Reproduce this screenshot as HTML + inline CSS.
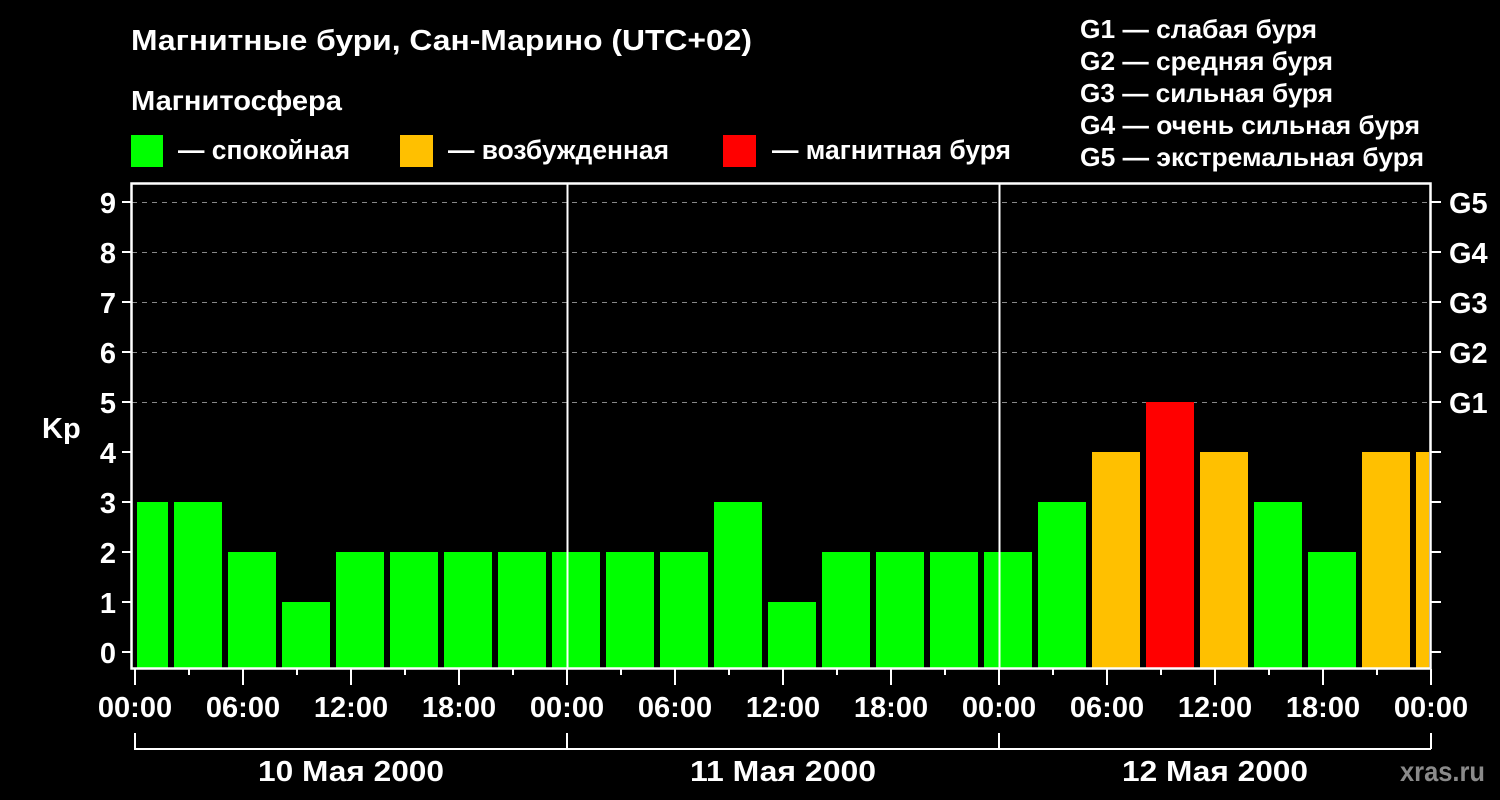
<!DOCTYPE html>
<html><head><meta charset="utf-8"><style>
html,body{margin:0;padding:0;background:#000;width:1500px;height:800px;overflow:hidden}
svg{display:block}
text{font-family:"Liberation Sans","DejaVu Sans",sans-serif;font-weight:bold;fill:#fff}
</style></head><body>
<svg width="1500" height="800" viewBox="0 0 1500 800" xmlns="http://www.w3.org/2000/svg">
<rect width="1500" height="800" fill="#000"/>
<text x="131" y="50" font-size="29" textLength="621" lengthAdjust="spacingAndGlyphs">Магнитные бури, Сан-Марино (UTC+02)</text>
<text x="131" y="110" font-size="28" textLength="211" lengthAdjust="spacingAndGlyphs">Магнитосфера</text>
<rect x="131" y="135" width="32" height="32" fill="#00ff00"/>
<text x="178" y="159" font-size="27" textLength="172" lengthAdjust="spacingAndGlyphs">— спокойная</text>
<rect x="400" y="135" width="33" height="32" fill="#ffc000"/>
<text x="448" y="159" font-size="27" textLength="221" lengthAdjust="spacingAndGlyphs">— возбужденная</text>
<rect x="723" y="135" width="33" height="32" fill="#ff0000"/>
<text x="772" y="159" font-size="27" textLength="239" lengthAdjust="spacingAndGlyphs">— магнитная буря</text>
<g font-size="26">
<text x="1080" y="38" textLength="237" lengthAdjust="spacingAndGlyphs">G1 — слабая буря</text>
<text x="1080" y="70" textLength="253" lengthAdjust="spacingAndGlyphs">G2 — средняя буря</text>
<text x="1080" y="102" textLength="253" lengthAdjust="spacingAndGlyphs">G3 — сильная буря</text>
<text x="1080" y="134" textLength="340" lengthAdjust="spacingAndGlyphs">G4 — очень сильная буря</text>
<text x="1080" y="166" textLength="344" lengthAdjust="spacingAndGlyphs">G5 — экстремальная буря</text>
</g>
<g stroke="#888" stroke-width="1" stroke-dasharray="5,5">
<line x1="132" y1="202.5" x2="1431" y2="202.5"/>
<line x1="132" y1="252.5" x2="1431" y2="252.5"/>
<line x1="132" y1="302.5" x2="1431" y2="302.5"/>
<line x1="132" y1="352.5" x2="1431" y2="352.5"/>
<line x1="132" y1="402.5" x2="1431" y2="402.5"/>
</g>
<g>
<rect x="137" y="502" width="31" height="166" fill="#00ff00"/>
<rect x="174" y="502" width="48" height="166" fill="#00ff00"/>
<rect x="228" y="552" width="48" height="116" fill="#00ff00"/>
<rect x="282" y="602" width="48" height="66" fill="#00ff00"/>
<rect x="336" y="552" width="48" height="116" fill="#00ff00"/>
<rect x="390" y="552" width="48" height="116" fill="#00ff00"/>
<rect x="444" y="552" width="48" height="116" fill="#00ff00"/>
<rect x="498" y="552" width="48" height="116" fill="#00ff00"/>
<rect x="552" y="552" width="48" height="116" fill="#00ff00"/>
<rect x="606" y="552" width="48" height="116" fill="#00ff00"/>
<rect x="660" y="552" width="48" height="116" fill="#00ff00"/>
<rect x="714" y="502" width="48" height="166" fill="#00ff00"/>
<rect x="768" y="602" width="48" height="66" fill="#00ff00"/>
<rect x="822" y="552" width="48" height="116" fill="#00ff00"/>
<rect x="876" y="552" width="48" height="116" fill="#00ff00"/>
<rect x="930" y="552" width="48" height="116" fill="#00ff00"/>
<rect x="984" y="552" width="48" height="116" fill="#00ff00"/>
<rect x="1038" y="502" width="48" height="166" fill="#00ff00"/>
<rect x="1092" y="452" width="48" height="216" fill="#ffc000"/>
<rect x="1146" y="402" width="48" height="266" fill="#ff0000"/>
<rect x="1200" y="452" width="48" height="216" fill="#ffc000"/>
<rect x="1254" y="502" width="48" height="166" fill="#00ff00"/>
<rect x="1308" y="552" width="48" height="116" fill="#00ff00"/>
<rect x="1362" y="452" width="48" height="216" fill="#ffc000"/>
<rect x="1416" y="452" width="13" height="216" fill="#ffc000"/>
</g>
<line x1="567.5" y1="183" x2="567.5" y2="668" stroke="#fff" stroke-width="2"/>
<line x1="999.5" y1="183" x2="999.5" y2="668" stroke="#fff" stroke-width="2"/>
<rect x="131.5" y="183.5" width="1299" height="485" fill="none" stroke="#fff" stroke-width="2.5"/>
<g stroke="#fff" stroke-width="2">
<path d="M122 202H131M122 252H131M122 302H131M122 352H131M122 402H131M122 452H131M122 502H131M122 552H131M122 602H131M122 652H131"/>
<path d="M1431 202H1441M1431 252H1441M1431 302H1441M1431 352H1441M1431 402H1441M1431 452H1441M1431 502H1441M1431 552H1441M1431 602H1441M1431 652H1441"/>
<path d="M135 669V685M243 669V685M351 669V685M459 669V685M567 669V685M675 669V685M783 669V685M891 669V685M999 669V685M1107 669V685M1215 669V685M1323 669V685M1431 669V685"/>
<path d="M189 669V675M297 669V675M405 669V675M513 669V675M621 669V675M729 669V675M837 669V675M945 669V675M1053 669V675M1161 669V675M1269 669V675M1377 669V675"/>
<path d="M135 733V749H1431M567 733V749M999 733V749M1431 733V749" fill="none"/>
</g>
<g font-size="29" text-anchor="end">
<text x="116" y="213">9</text><text x="116" y="263">8</text><text x="116" y="313">7</text>
<text x="116" y="363">6</text><text x="116" y="413">5</text><text x="116" y="463">4</text>
<text x="116" y="513">3</text><text x="116" y="563">2</text><text x="116" y="613">1</text>
<text x="116" y="663">0</text>
</g>
<g font-size="29">
<text x="1449" y="213">G5</text><text x="1449" y="263">G4</text><text x="1449" y="313">G3</text>
<text x="1449" y="363">G2</text><text x="1449" y="413">G1</text>
<text x="42" y="438">Kp</text>
</g>
<g font-size="29" text-anchor="middle">
<text x="135" y="717">00:00</text><text x="243" y="717">06:00</text><text x="351" y="717">12:00</text>
<text x="459" y="717">18:00</text><text x="567" y="717">00:00</text><text x="675" y="717">06:00</text>
<text x="783" y="717">12:00</text><text x="891" y="717">18:00</text><text x="999" y="717">00:00</text>
<text x="1107" y="717">06:00</text><text x="1215" y="717">12:00</text><text x="1323" y="717">18:00</text>
<text x="1431" y="717">00:00</text>
<text x="351" y="781" textLength="186" lengthAdjust="spacingAndGlyphs">10 Мая 2000</text>
<text x="783" y="781" textLength="186" lengthAdjust="spacingAndGlyphs">11 Мая 2000</text>
<text x="1215" y="781" textLength="186" lengthAdjust="spacingAndGlyphs">12 Мая 2000</text>
</g>
<text x="1400" y="781" font-size="28" style="fill:#8a8a8a" textLength="85" lengthAdjust="spacingAndGlyphs">xras.ru</text>
</svg>
</body></html>
